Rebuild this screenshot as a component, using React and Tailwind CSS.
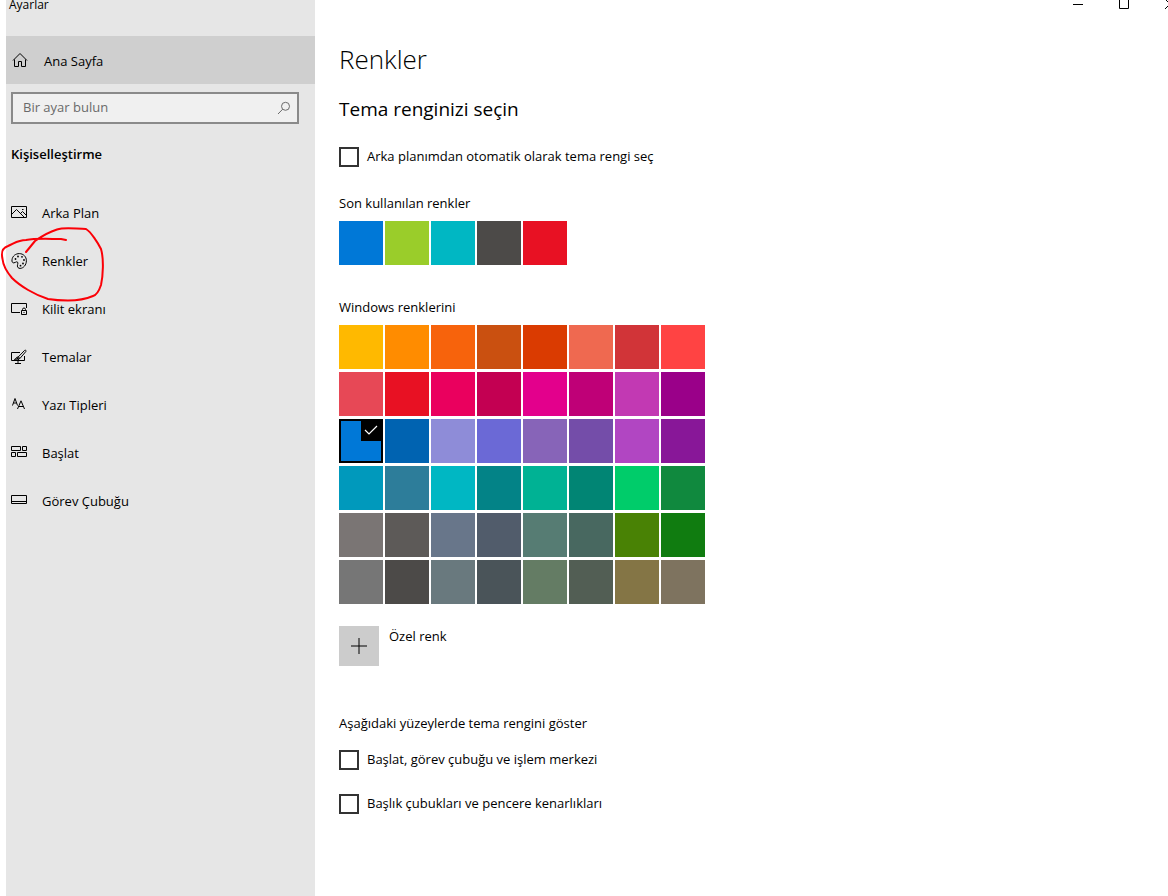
import React from 'react';

const recentColors = [
  'bg-[#0078d7]',
  'bg-[#9acd2a]',
  'bg-[#00b7c3]',
  'bg-[#4c4a48]',
  'bg-[#e81123]',
];

const windowsColors = [
  'bg-[#ffb900]', 'bg-[#ff8c00]', 'bg-[#f7630c]', 'bg-[#ca5010]', 'bg-[#da3b01]', 'bg-[#ef6950]', 'bg-[#d13438]', 'bg-[#ff4343]',
  'bg-[#e74856]', 'bg-[#e81123]', 'bg-[#ea005e]', 'bg-[#c30052]', 'bg-[#e3008c]', 'bg-[#bf0077]', 'bg-[#c239b3]', 'bg-[#9a0089]',
  'bg-[#0078d7]', 'bg-[#0063b1]', 'bg-[#8e8cd8]', 'bg-[#6b69d6]', 'bg-[#8764b8]', 'bg-[#744da9]', 'bg-[#b146c2]', 'bg-[#881798]',
  'bg-[#0099bc]', 'bg-[#2d7d9a]', 'bg-[#00b7c3]', 'bg-[#038387]', 'bg-[#00b294]', 'bg-[#018574]', 'bg-[#00cc6a]', 'bg-[#10893e]',
  'bg-[#7a7574]', 'bg-[#5d5a58]', 'bg-[#68768a]', 'bg-[#515c6b]', 'bg-[#567c73]', 'bg-[#486860]', 'bg-[#498205]', 'bg-[#107c10]',
  'bg-[#767676]', 'bg-[#4c4a48]', 'bg-[#69797e]', 'bg-[#4a5459]', 'bg-[#647c64]', 'bg-[#525e54]', 'bg-[#847545]', 'bg-[#7e735f]',
];

const selectedColor = 'bg-[#0078d7]';

const Icon = ({ children }) => (
  <svg className="size-4 shrink-0" viewBox="0 0 16 16" fill="none" stroke="currentColor" aria-hidden="true">
    {children}
  </svg>
);

const HomeIcon = () => (
  <Icon>
    <path d="M1 8.500 8 1.500l7 7M2.500 7.500v7h4v-5h3v5h4v-7" />
  </Icon>
);

const PictureIcon = () => (
  <Icon>
    <path d="M.5 1.500h15v11H.5zM1 9l4.500-4.500 7.500 7.500M9.500 8.500l2-2L15 10M11 4.500h1.500" />
  </Icon>
);

const PaletteIcon = () => (
  <Icon>
    <path d="M1 6.800C1.500 2.800 4.800.6 8.300.6c4.100 0 7.100 3.100 7.100 7.100 0 4.300-3.100 7.700-6.300 7.700-1.700 0-2.700-1-2.700-2.500 0-1.200.5-1.900.5-2.800 0-.8-.5-1.300-1.200-1.300-1 0-1.600 1.100-3 1.100C1.400 9.900.7 8.600 1 6.800Z" />
    <g fill="currentColor" stroke="none">
      <circle cx="4.500" cy="6" r=".9" />
      <circle cx="7" cy="3.500" r=".9" />
      <circle cx="11" cy="3.800" r=".9" />
      <circle cx="13" cy="7" r=".9" />
      <circle cx="12" cy="10.500" r=".9" />
      <circle cx="9.500" cy="12.700" r=".9" />
    </g>
  </Icon>
);

const LockScreenIcon = () => (
  <Icon>
    <path d="M9 11.500H.5v-9h15V7M10.500 9.500h5v4h-5zM11.500 9.500v-1a1.500 1.500 0 0 1 3 0v1M12.500 11.500h1" />
  </Icon>
);

const ThemesIcon = () => (
  <Icon>
    <path d="M9 3.500H.5v8h13V7M7 11.500v3M4 14.500h6" />
    <path d="M7 8.200 13.600 1.400c.9-.7 1.900.2 1.200 1.200L8.800 9.600M7 8c-1.800-.2-2.200 2.200-3.600 2.500 2 .9 5 .5 5.200-1.200C8.600 8.600 7.900 8 7 8Z" />
    <path d="M4.500 10.300c1.700.2 3.400-.2 3.700-1.300L7 8.200c-1.200.2-1.300 1.500-2.500 2.100Z" fill="currentColor" stroke="none" />
  </Icon>
);

const FontsIcon = () => (
  <Icon>
    <path d="m1.500 8.500 2.500-7 2.500 7M2.500 6h3M6.500 12 10 3.800l3.500 8.200M7.800 9.500h4.400" />
  </Icon>
);

const StartIcon = () => (
  <Icon>
    <path d="M.5 1.500h9v4h-9zM11.500 1.500h4v4h-4zM.5 7.500h4v4h-4zM6.500 7.500h9v4h-9z" />
  </Icon>
);

const TaskbarIcon = () => (
  <Icon>
    <path d="M.5 2.500h15v8H.5zM.5 8.500h15" />
  </Icon>
);

const navItems = [
  { title: 'Arka Plan', icon: PictureIcon },
  { title: 'Renkler', icon: PaletteIcon, circled: true },
  { title: 'Kilit ekranı', icon: LockScreenIcon },
  { title: 'Temalar', icon: ThemesIcon },
  { title: 'Yazı Tipleri', icon: FontsIcon },
  { title: 'Başlat', icon: StartIcon },
  { title: 'Görev Çubuğu', icon: TaskbarIcon },
];

const windowButtons = [
  { label: 'Simge durumuna küçült', path: 'M0 5.500h10' },
  { label: 'Ekranı kapla', path: 'M.5.5h9v9h-9z' },
  { label: 'Kapat', path: 'm0 0 10 10M10 0 0 10' },
];

// Hand-drawn red loop around a menu entry
const PenCircle = () => (
  <svg
    className="pointer-events-none absolute -top-3 -left-[6px] z-10 h-[80px] w-[110px]"
    viewBox="0 225 110 80"
    fill="none"
    stroke="#fb0007"
    strokeWidth="2"
    strokeLinecap="round"
    strokeLinejoin="round"
    aria-hidden="true"
  >
    <path d="M26 252 35 241C42 236 49 232 57 229.500 65 227 76 229 86 229 91 232 98 243 101 249 104 259 103 276 101 285 99 291 97 295 93 296 86 299 76 300.500 68 300.500 61 300.500 54 300 48 299 35 295 20 286 12 278 6 271 3 264 2.500 259 1 252 2 248 8 246 15 243 18 240 26 240 36 238 50 239 61 239L66 240" />
  </svg>
);

const NavItem = ({ item }) => (
  <li className="relative">
    <a href="#" className="flex h-12 items-center gap-[15px] pl-[5px]">
      <item.icon />
      {item.title}
    </a>
    {item.circled && <PenCircle />}
  </li>
);

const Swatch = ({ color, selected }) => (
  <button
    type="button"
    aria-pressed={!!selected}
    className={`flex size-11 items-start justify-end ${color} ${selected ? 'border-2 border-black' : ''}`}
  >
    {selected && (
      <span className="flex size-5 items-center justify-center bg-black text-white">
        <svg className="size-4" viewBox="0 0 16 16" fill="none" stroke="currentColor" aria-hidden="true">
          <path d="m2 7 4 4 8-8" strokeWidth="1.200" />
        </svg>
      </span>
    )}
  </button>
);

const CheckRow = ({ label }) => (
  <label className="flex h-5 w-fit items-center gap-2">
    <input type="checkbox" className="size-5 shrink-0 appearance-none border-2 border-[#333333] bg-white checked:bg-[#0078d7]" />
    <span className="pb-0.5">{label}</span>
  </label>
);

const Sidebar = () => (
  <aside className="ml-[6px] w-[309px] shrink-0 bg-[#e6e6e6]">
    <div className="h-9 pl-[3px] text-xs leading-[10px]">Ayarlar</div>
    <a href="#" className="flex h-12 items-center gap-4 bg-[#cfcfcf] pl-[6px]">
      <HomeIcon />
      <span className="pt-0.5">Ana Sayfa</span>
    </a>
    <div className="mt-2 mr-4 ml-[5px] flex h-8 items-center border-2 border-[#8a8a8a] bg-[#f0f0f0] pr-1.5 pl-2.5">
      <input
        type="text"
        aria-label="Bir ayar bulun"
        placeholder="Bir ayar bulun"
        className="min-w-0 flex-1 bg-transparent pb-0.5 outline-none placeholder:text-[#6a6a6a]"
      />
      <svg className="size-4 shrink-0 text-[#6a6a6a]" viewBox="0 0 16 16" fill="none" stroke="currentColor" aria-hidden="true">
        <circle cx="10.500" cy="6.300" r="4" />
        <path d="M7.700 9.200 3 14" />
      </svg>
    </div>
    <h2 className="mt-5 pl-[5px] leading-5 font-semibold">Kişiselleştirme</h2>
    <nav className="mt-[25px]">
      <ul>
        {navItems.map((item) => (
          <NavItem key={item.title} item={item} />
        ))}
      </ul>
    </nav>
  </aside>
);

const App = () => {
  return (
    <div className="flex min-h-screen overflow-hidden bg-white font-['Open_Sans',sans-serif] text-[13px] leading-5 text-black">
      <Sidebar />
      <div className="min-w-0 flex-1">
        <header className="-mr-[25px] flex h-9 items-start justify-end">
          {windowButtons.map((button) => (
            <button key={button.label} type="button" aria-label={button.label} className="flex w-[46px] justify-center">
              <svg className="h-[9px] w-[10px]" viewBox="0 1 10 9" fill="none" stroke="currentColor">
                <path d={button.path} />
              </svg>
            </button>
          ))}
        </header>
        <main className="px-6 pb-20">
          <h1 className="mt-[3px] text-[26px] leading-10 font-light">Renkler</h1>
          <h2 className="mt-4 text-[19px] leading-7">Tema renginizi seçin</h2>
          <div className="mt-6">
            <CheckRow label="Arka planımdan otomatik olarak tema rengi seç" />
          </div>

          <h3 className="mt-[26px]">Son kullanılan renkler</h3>
          <div className="mt-2 flex gap-0.5">
            {recentColors.map((color) => (
              <Swatch key={color} color={color} />
            ))}
          </div>

          <h3 className="mt-8">Windows renklerini</h3>
          <div className="mt-2 grid w-fit grid-cols-8 gap-x-0.5 gap-y-[3px]">
            {windowsColors.map((color) => (
              <Swatch key={color} color={color} selected={color === selectedColor} />
            ))}
          </div>

          <label className="mt-[22px] flex w-fit items-start gap-2.5">
            <button type="button" className="flex size-10 items-center justify-center bg-[#cccccc]">
              <svg className="size-4" viewBox="0 0 16 16" stroke="#000000" strokeOpacity="0.5" strokeWidth="2" aria-hidden="true">
                <path d="M0 8h16" />
                <path d="M8 0v16" />
              </svg>
            </button>
            Özel renk
          </label>

          <h3 className="mt-[47px]">Aşağıdaki yüzeylerde tema rengini göster</h3>
          <div className="mt-[17px] flex flex-col gap-6">
            <CheckRow label="Başlat, görev çubuğu ve işlem merkezi" />
            <CheckRow label="Başlık çubukları ve pencere kenarlıkları" />
          </div>
        </main>
      </div>
    </div>
  );
};

export default App;
